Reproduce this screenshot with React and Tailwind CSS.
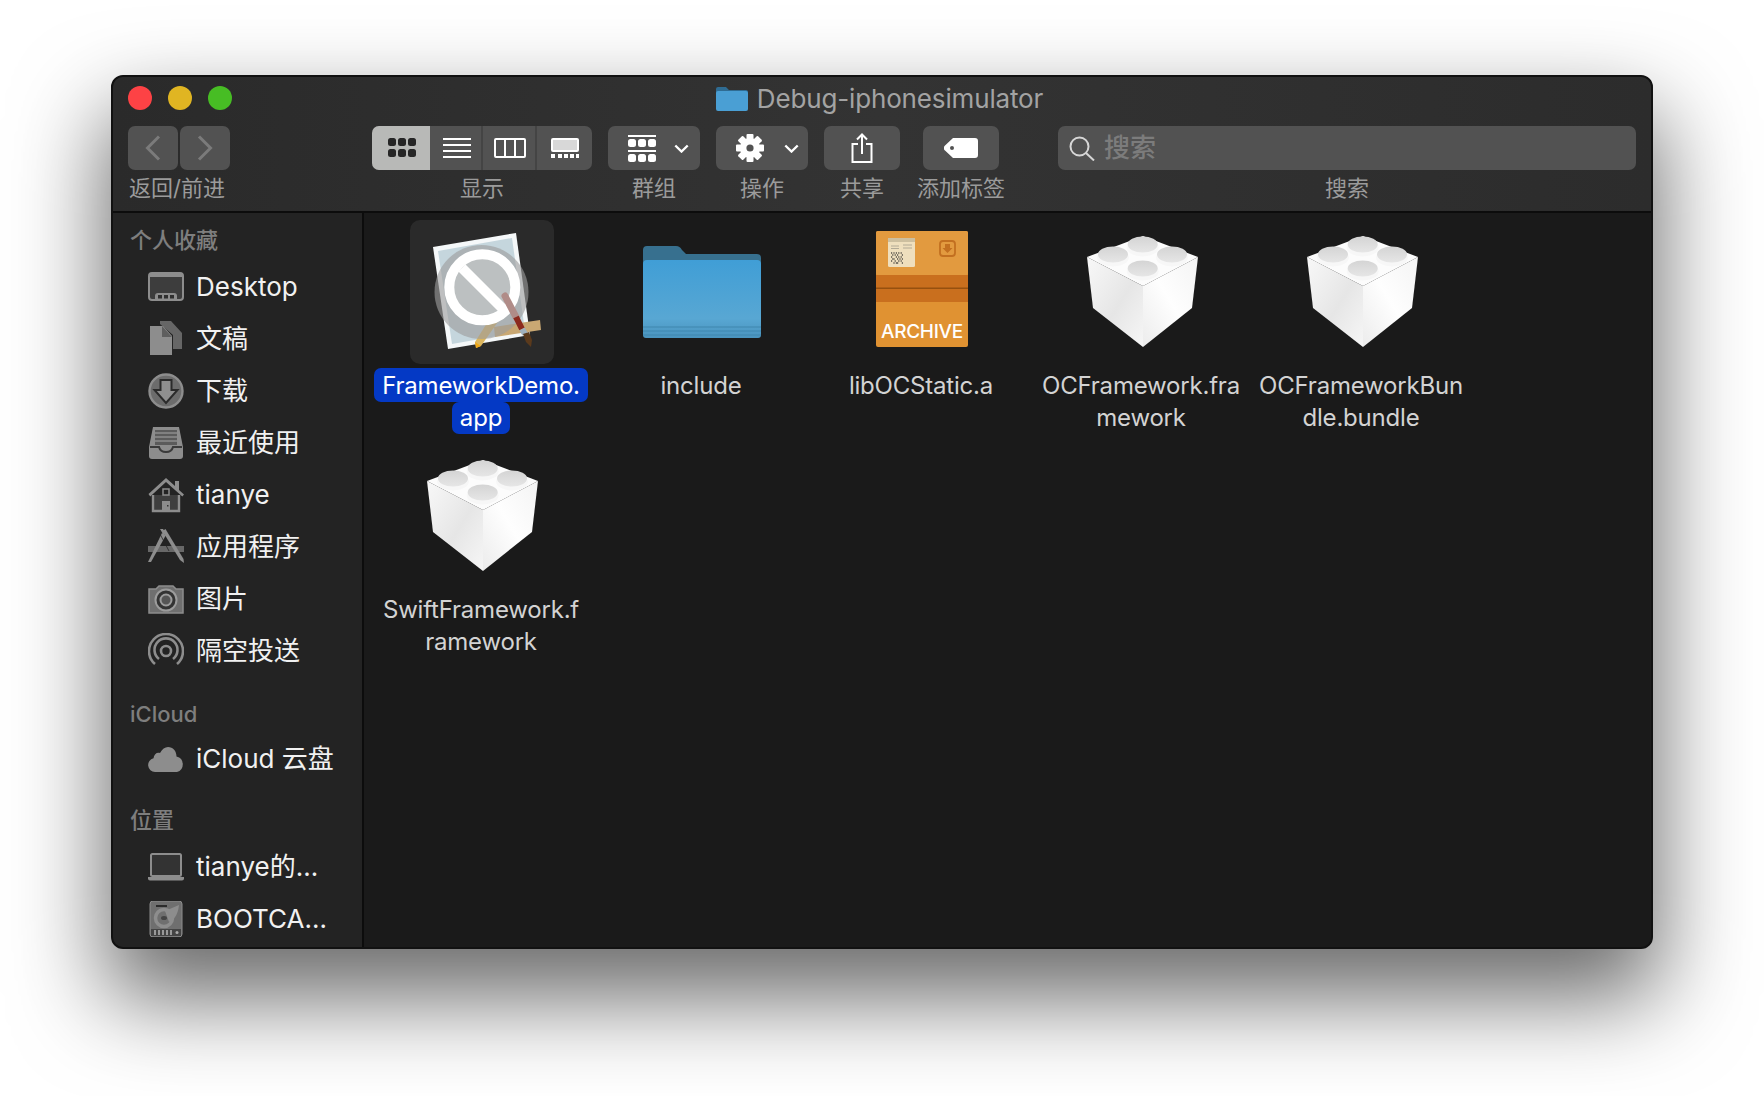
import React from "react";

const font = { fontFamily: 'Inter, "Noto Sans CJK SC", sans-serif' };

const Chevron = () => (
  <svg width="15" height="9" viewBox="0 0 15 9" className="shrink-0">
    <path d="M1.300 1.500 7.500 7.500l6.200-6" fill="none" stroke="#fff" strokeWidth="2.400" />
  </svg>
);

const Dots = ({ color, y, size = 8, x = 0, gap = 10 }) => (
  <>
    {[0, 1, 2].map((i) => (
      <rect key={i} x={x + i * gap} y={y} width={size} height={size} rx="2.5" fill={color} />
    ))}
  </>
);

const Gear = () => {
  const teeth = [0, 45, 90, 135];
  return (
    <svg width="30" height="30" viewBox="0 0 30 30">
      {teeth.map((a) => (
        <rect key={a} x="11.5" y="1" width="7" height="28" rx="1" fill="#fff" transform={`rotate(${a} 15 15)`} />
      ))}
      <circle cx="15" cy="15" r="10" fill="#fff" />
      <circle cx="15" cy="15" r="3.6" fill="#525252" />
    </svg>
  );
};

function TitleFolder() {
  return (
    <svg width="32" height="24" viewBox="0 0 32 24" className="shrink-0">
      <path d="M0 2a2 2 0 0 1 2-2h8l3 3h17a2 2 0 0 1 2 2v6H0Z" fill="#2f6c93" />
      <rect x="0" y="4" width="32" height="20" rx="2" fill="#4a9fd4" />
    </svg>
  );
}

function ToolGroup({ label, className = "", labelClass = "", children }) {
  return (
    <div className={`flex flex-col items-center ${className}`}>
      {children}
      <div className={`mt-[7px] h-[22px] whitespace-nowrap text-[22px] leading-[22px] text-[#9b9b9b] ${labelClass}`}>{label}</div>
    </div>
  );
}

const btn = "flex h-[44px] items-center rounded-[7px] bg-[#525252]";

function Toolbar() {
  return (
    <div className="h-[136px] shrink-0 bg-gradient-to-r from-[#2a2a2a] via-[#333333] to-[#2c2c2c] border-b-2 border-[#0c0c0c]">
      <div className="mb-[7px] grid h-[42px] grid-cols-[1fr_auto_1fr] items-center pl-[15px]">
        <div className="flex gap-[16px]">
          <span className="h-[24px] w-[24px] rounded-full bg-[#fd4245]" />
          <span className="h-[24px] w-[24px] rounded-full bg-[#e0b522]" />
          <span className="h-[24px] w-[24px] rounded-full bg-[#47bd24]" />
        </div>
        <div className="flex items-center gap-[9px] pr-[20px] pt-[1px]">
          <TitleFolder />
          <span className="text-[26px] leading-[32px] tracking-[-0.15px] text-[#a3a3a3]">Debug-iphonesimulator</span>
        </div>
        <div />
      </div>
      <div className="flex pl-[15px]">
        <ToolGroup label="返回/前进" className="w-[102px]" labelClass="pr-[4px]">
          <div className="flex gap-[2px]">
            <div className={`${btn} w-[50px] justify-center`}>
              <svg width="16" height="26" viewBox="0 0 16 26"><path d="M14 1.5 2.5 13 14 24.5" fill="none" stroke="#7b7b7b" strokeWidth="3" /></svg>
            </div>
            <div className={`${btn} w-[50px] justify-center`}>
              <svg width="16" height="26" viewBox="0 0 16 26"><path d="M2 1.5 13.5 13 2 24.5" fill="none" stroke="#7b7b7b" strokeWidth="3" /></svg>
            </div>
          </div>
        </ToolGroup>
        <ToolGroup label="显示" className="ml-[142px] w-[220px]">
          <div className="flex h-[44px] w-[220px] overflow-hidden rounded-[7px] bg-[#525252]">
            <div className="flex w-[58px] items-center justify-center bg-[#b8b9b7] pl-[2px]">
              <svg width="28" height="20" viewBox="0 0 28 20">
                <Dots color="#262626" y="0" />
                <Dots color="#262626" y="11" />
              </svg>
            </div>
            <div className="flex w-[53px] items-center justify-center border-r-2 border-[#444444] pl-[2px]">
              <svg width="28" height="20" viewBox="0 0 28 20" fill="#fff">
                <rect y="0" width="28" height="2" /><rect y="6" width="28" height="2" /><rect y="12" width="28" height="2" /><rect y="18" width="28" height="2" />
              </svg>
            </div>
            <div className="flex w-[54px] items-center justify-center border-r-2 border-[#444444] pl-[2px]">
              <svg width="32" height="20" viewBox="0 0 32 20" fill="none" stroke="#fff" strokeWidth="2">
                <rect x="1" y="1" width="30" height="18" rx="1" /><path d="M11 1v18M21 1v18" />
              </svg>
            </div>
            <div className="flex w-[55px] items-center justify-center">
              <svg width="28" height="20" viewBox="0 0 28 20">
                <rect x="1" y="1" width="26" height="12" rx="1" fill="#d8d8d8" stroke="#fff" strokeWidth="2" />
                {[0, 1, 2, 3, 4].map((i) => (<rect key={i} x={i * 6 + (i ? 1 : 0)} y="16" width="4" height="4" fill="#fff" />))}
              </svg>
            </div>
          </div>
        </ToolGroup>
        <ToolGroup label="群组" className="ml-[16px] w-[92px]">
          <div className={`${btn} w-[92px] justify-between pr-[11px] pl-[20px]`}>
            <svg width="28" height="27" viewBox="0 0 28 27">
              <rect width="28" height="2" fill="#fff" />
              <Dots color="#fff" y="4" />
              <rect y="15" width="28" height="2" fill="#fff" />
              <Dots color="#fff" y="19" />
            </svg>
            <Chevron />
          </div>
        </ToolGroup>
        <ToolGroup label="操作" className="ml-[16px] w-[92px]">
          <div className={`${btn} w-[92px] justify-between pr-[9px] pl-[19px]`}>
            <Gear />
            <Chevron />
          </div>
        </ToolGroup>
        <ToolGroup label="共享" className="ml-[16px] w-[76px]">
          <div className={`${btn} w-[76px] justify-center`}>
            <svg width="22" height="30" viewBox="0 0 22 30" fill="none" stroke="#fff" strokeWidth="2">
              <path d="M7 11H1.5v18h19V11H15" />
              <path d="M11 21V1.5M6 6.5l5-5 5 5" />
            </svg>
          </div>
        </ToolGroup>
        <ToolGroup label="添加标签" className="ml-[23px] w-[76px]">
          <div className={`${btn} w-[76px] justify-center`}>
            <svg width="34" height="20" viewBox="0 0 34 20">
              <path fillRule="evenodd" d="M9 0h22a3 3 0 0 1 3 3v14a3 3 0 0 1-3 3H9L1 12.5a3.5 3.5 0 0 1 0-5ZM8 8a2 2 0 1 0 0 4 2 2 0 0 0 0-4Z" fill="#fff" />
            </svg>
          </div>
        </ToolGroup>
        <ToolGroup label="搜索" className="ml-[59px] w-[578px]">
          <div className={`${btn} w-[578px] justify-start pl-[11px]`}>
            <svg width="26" height="25" viewBox="0 0 26 25" fill="none" stroke="#d6d6d6" strokeWidth="2">
              <circle cx="10.5" cy="10.5" r="9" /><path d="m17 17 8 7.5" />
            </svg>
            <span className="ml-[9px] text-[26px] font-medium leading-[32px] text-[#7c7c7c]">搜索</span>
          </div>
        </ToolGroup>
      </div>
    </div>
  );
}

const G = "#8d8d8d";
const sideIcons = {
  desktop: (
    <>
      <rect x="1" y="4" width="34" height="27" rx="3" fill="#3d3d3d" stroke={G} strokeWidth="2" />
      <rect x="1" y="4" width="34" height="4" fill={G} />
      <path d="M7 31v-4a3 3 0 0 1 3-3h16a3 3 0 0 1 3 3v4Z" fill={G} />
      <rect x="10" y="26" width="4" height="3.5" fill="#2f2f2f" /><rect x="16" y="26" width="4" height="3.5" fill="#2f2f2f" /><rect x="22" y="26" width="4" height="3.5" fill="#2f2f2f" />
    </>
  ),
  docs: (
    <>
      <path d="M12 0h11l11 12v16h-9V14L12 3Z" fill="#666" />
      <path d="M2 5h13l9 10v19H2Z" fill={G} />
      <path d="M14 5v11h10Z" fill="#5e5e5e" />
    </>
  ),
  download: (
    <>
      <circle cx="18" cy="18" r="16.5" fill="#6c6c6c" stroke={G} strokeWidth="2.4" />
      <path d="M12.5 7h11v10h6L18 30 6.5 17h6Z" fill="#8f8f8f" stroke="#2b2b2b" strokeWidth="2" />
    </>
  ),
  recents: (
    <>
      <path d="M5 2h26l4 20v9a3 3 0 0 1-3 3H4a3 3 0 0 1-3-3v-9Z" fill={G} />
      <rect x="7" y="5" width="22" height="15" fill="#5b5b5b" />
      <path d="M7 8h22M7 12h22M7 16h22" stroke={G} strokeWidth="1.6" />
      <path d="M2 22h9c1 4 3 5 7 5s6-1 7-5h9" fill="none" stroke="#3a3a3a" strokeWidth="2" />
    </>
  ),
  home: (
    <>
      <path d="M5 18v16h26V18" fill="#3e3e3e" stroke={G} strokeWidth="2.400" />
      <path d="M0.500 17 18 1l9 8V4h4v9l5 4.500-1.700 2L18 5 2.200 19.500Z" fill={G} />
      <rect x="15" y="12" width="6" height="6" fill="none" stroke={G} strokeWidth="1.500" />
      <rect x="14" y="24" width="8" height="10" fill={G} />
      <rect x="19" y="28" width="1.500" height="1.500" fill="#333" />
    </>
  ),
  apps: (
    <>
      <path d="M0 17h36v6H0Z" fill={G} opacity=".65" />
      <path d="m0 33 14-29 4 2L3 33Z" fill={G} />
      <path d="M12 0h3l4 6-4-1Z" fill={G} />
      <path d="m14.500 2 3-2 18 30 .500 4-4-3Z" fill={G} />
      <path d="M21 22 12 5" stroke="#232323" strokeWidth=".800" />
    </>
  ),
  camera: (
    <>
      <path d="M1 8h7l3-3h14l3 3h7v24H1Z" fill="#6f6f6f" stroke={G} strokeWidth="1.500" />
      <circle cx="18" cy="19" r="10.500" fill="#333" stroke="#9c9c9c" strokeWidth="2" />
      <circle cx="18" cy="19" r="5.500" fill="#555" stroke="#9c9c9c" strokeWidth="2" />
    </>
  ),
  airdrop: (
    <g fill="none" stroke={G} strokeWidth="2.600">
      <path d="M7 31A17 17 0 1 1 29 31" />
      <path d="M11 26a11.500 11.500 0 1 1 14 0" />
      <circle cx="18" cy="18" r="5" />
    </g>
  ),
  cloud: (
    <path d="M7 31a7 7 0 0 1-1.500-13.800C6 13 9 11 12 12c2-4 5-6 8-6 5 0 8.500 4 8.500 9.500A8 8 0 0 1 29 31Z" fill={G} />
  ),
  laptop: (
    <>
      <rect x="3" y="5" width="30" height="22" rx="1.500" fill="#333" stroke={G} strokeWidth="2" />
      <path d="M0 28h36v1.500a2 2 0 0 1-2 2H2a2 2 0 0 1-2-2Z" fill={G} />
    </>
  ),
  disk: (
    <>
      <path d="M5 0h26a3 3 0 0 1 3 3v30a3 3 0 0 1-3 3H5a3 3 0 0 1-3-3V3a3 3 0 0 1 3-3Z" fill="#6f6f6f" stroke={G} strokeWidth="1" />
      <rect x="8" y="4" width="11" height="2" fill="#2b2b2b" />
      <circle cx="16" cy="17" r="8.500" fill="none" stroke={G} strokeWidth="3.500" />
      <path d="M17 10 31 4c-1 9-4 14-10 17Z" fill={G} />
      <ellipse cx="16" cy="17" rx="3" ry="2" fill="#444" />
      <rect x="3" y="28" width="30" height="7" fill="#444" />
      <path d="M7 29v5M11 29v5M15 29v5M19 29v5M23 29v5" stroke="#999" strokeWidth="2" />
      <circle cx="29" cy="31.500" r="1.500" fill="#aaa" />
    </>
  ),
};

function Row({ icon, children }) {
  return (
    <div className="flex h-[52px] items-center pl-[35px]">
      <svg width="36" height="36" viewBox="0 0 36 36" className="shrink-0">{sideIcons[icon]}</svg>
      <span className="ml-[12px] whitespace-nowrap text-[26px] leading-[32px] text-[#f1f1f1]">{children}</span>
    </div>
  );
}

function SideHead({ children, className = "" }) {
  return <div className={`h-[28px] pl-[17px] text-[22px] font-medium leading-[28px] text-[#7e7e7e] ${className}`}>{children}</div>;
}

function Sidebar() {
  return (
    <aside className="w-[251px] shrink-0 border-r-2 border-[#0c0c0c] bg-[#232323] pt-[13px]">
      <SideHead className="mb-[7px]">个人收藏</SideHead>
      <Row icon="desktop">Desktop</Row>
      <Row icon="docs">文稿</Row>
      <Row icon="download">下载</Row>
      <Row icon="recents">最近使用</Row>
      <Row icon="home">tianye</Row>
      <Row icon="apps">应用程序</Row>
      <Row icon="camera">图片</Row>
      <Row icon="airdrop">隔空投送</Row>
      <SideHead className="mt-[23px] mb-[5px]">iCloud</SideHead>
      <Row icon="cloud">iCloud 云盘</Row>
      <SideHead className="mt-[21px] mb-[7px]">位置</SideHead>
      <Row icon="laptop">tianye的…</Row>
      <Row icon="disk">BOOTCA…</Row>
    </aside>
  );
}

function LegoIcon() {
  const Stud = ({ cx, cy }) => (
    <g>
      <ellipse cx={cx} cy={cy + 3} rx="16" ry="9" fill="#f7f7f7" />
      <ellipse cx={cx} cy={cy} rx="15" ry="8" fill="url(#studTop)" />
    </g>
  );
  return (
    <svg width="144" height="144" viewBox="0 0 144 144">
      <defs>
        <linearGradient id="studTop" x1="0" y1="0" x2="0" y2="1">
          <stop offset="0" stopColor="#d4d4d4" />
          <stop offset="1" stopColor="#e6e6e6" />
        </linearGradient>
        <linearGradient id="legoL" x1="0" y1="0" x2="1" y2="1">
          <stop offset="0" stopColor="#f8f8f8" />
          <stop offset=".55" stopColor="#e6e6e6" />
          <stop offset="1" stopColor="#f6f6f6" />
        </linearGradient>
        <linearGradient id="legoR" x1="1" y1="0" x2="0" y2="1">
          <stop offset="0" stopColor="#f4f4f4" />
          <stop offset=".5" stopColor="#fefefe" />
          <stop offset="1" stopColor="#ececec" />
        </linearGradient>
      </defs>
      <path d="M18 37 74 16l55 21-55 29Z" fill="#fcfcfc" />
      <path d="M18 37 74 66v61L24 88Z" fill="url(#legoL)" />
      <path d="M129 37 74 66v61l49-39Z" fill="url(#legoR)" />
      <Stud cx={73.7} cy={24.5} />
      <Stud cx={44} cy={34.5} />
      <Stud cx={103} cy={34.5} />
      <Stud cx={73.7} cy={48.5} />
    </svg>
  );
}

function FolderIcon() {
  return (
    <svg width="144" height="144" viewBox="0 0 144 144">
      <defs>
        <linearGradient id="folderF" x1="0" y1="0" x2="0" y2="1">
          <stop offset="0" stopColor="#409ed6" />
          <stop offset=".75" stopColor="#58a7d3" />
          <stop offset="1" stopColor="#4a93bd" />
        </linearGradient>
      </defs>
      <path d="M14 30a4 4 0 0 1 4-4h29c3 0 4 1 6 4l4 4h71a4 4 0 0 1 4 4v20H14Z" fill="#37708f" />
      <path d="M14 44a4 4 0 0 1 4-4h110a4 4 0 0 1 4 4v71a3 3 0 0 1-3 3H17a3 3 0 0 1-3-3Z" fill="url(#folderF)" />
      <path d="M14 107h118M14 111h118M14 115h118" stroke="#3f86ae" strokeWidth="1" />
    </svg>
  );
}

const qr = [
  [0, 0], [2, 0], [4, 0], [6, 0], [8, 0], [1, 1], [3, 1], [5, 1], [9, 1], [0, 2], [4, 2], [6, 2], [8, 2],
  [1, 3], [2, 3], [5, 3], [7, 3], [9, 3], [0, 4], [3, 4], [6, 4], [8, 4], [2, 5], [4, 5], [5, 5], [9, 5],
];

function ArchiveIcon() {
  return (
    <div className="relative h-[144px] w-[144px]">
      <svg width="144" height="144" viewBox="0 0 144 144">
        <rect x="27" y="11" width="92" height="116" rx="2" fill="#e09232" />
        <rect x="27" y="11" width="92" height="44" rx="2" fill="#e29a3f" />
        <rect x="27" y="55" width="92" height="27" fill="#c96f1e" />
        <rect x="27" y="67.500" width="92" height="1.500" fill="#96500f" />
        <rect x="39" y="18" width="27" height="29" rx="1.500" fill="#efdfbd" />
        <rect x="39" y="18" width="27" height="4" fill="#cdbf9f" />
        <path d="M42 26h8M42 28.500h8M54 25h9M54 28h9" stroke="#b3aa95" strokeWidth="1" />
        {qr.map(([x, y]) => (
          <rect key={`${x}-${y}`} x={42 + x * 1.2} y={32 + y * 2} width="1.200" height="2" fill="#7d7666" />
        ))}
        <rect x="91" y="21" width="15" height="15" rx="3" fill="none" stroke="#c26f20" strokeWidth="1.800" />
        <path d="M96 24h5v4h2.500l-5 5-5-5H96Z" fill="#c26f20" />
      </svg>
      <span className="absolute left-[32px] top-[100px] text-[19px] font-medium leading-[24px] tracking-[-0.3px] text-white">ARCHIVE</span>
    </div>
  );
}

function AppIcon() {
  return (
    <div className="ml-[1px] flex h-[144px] w-[144px] items-center justify-center rounded-[10px] bg-[#2a2a2a]">
      <svg width="144" height="144" viewBox="0 0 144 144">
        <path d="M23 27 106 13l14 102-82 14Z" fill="#f5f8f9" />
        <path d="M28 31 102 18l13 93-73 13Z" fill="#c5d6dd" />
        <path d="m84 107 46-7 1 10-46 7Z" fill="#c9a873" />
        <path d="M84 92 65 122l1 6 5-2 21-30Z" fill="#dcb65f" />
        <path d="m65 122 1 6 5-2Z" fill="#f0a818" />
        <circle cx="71.500" cy="72" r="47" fill="#9c9c9c" fillOpacity=".62" />
        <circle cx="72.300" cy="67.300" r="33" fill="#bcc0c1" stroke="#ffffff" strokeWidth="10" />
        <path d="M52 48 94 90" stroke="#fff" strokeWidth="10" />
        <path d="M95 76 106 97" stroke="#b08c88" strokeWidth="7" strokeLinecap="round" />
        <path d="M106 97 112 109" stroke="#8c2a1e" strokeWidth="6" />
        <path d="M112 109 115 114" stroke="#9fb0bd" strokeWidth="6" />
        <path d="m113 114 6-2 3 8-1 7-5-5Z" fill="#5b3a1c" />
      </svg>
    </div>
  );
}

function Item({ lines, selected, children }) {
  return (
    <div className="flex h-[224px] w-[220px] flex-col items-center">
      <div className="h-[144px] w-[144px]">{children}</div>
      <div className="mt-[6px] flex flex-col items-center">
        {lines.map((l, i) => (
          <span
            key={l}
            className={`whitespace-nowrap text-[24px] tracking-[-0.2px] ${
              selected ? "rounded-[7px] bg-[#0439c5] px-[8px] text-white" : "text-[#d3d3d3]"
            } ${selected && i === 0 ? "-mt-[2px] h-[34px] leading-[36px]" : "h-[32px] leading-[32px]"}`}
          >
            {l}
          </span>
        ))}
      </div>
    </div>
  );
}

export default function App() {
  return (
    <div className="h-[1096px] w-[1764px] overflow-hidden bg-white pl-[111px] pt-[75px]" style={font}>
      <div className="flex h-[874px] w-[1542px] flex-col overflow-visible rounded-[12px] border-2 border-[#111111] bg-[#1a1a1a] shadow-[0_44px_90px_6px_rgba(0,0,0,0.58)]">
        <div className="flex h-full flex-col overflow-hidden rounded-[10px]">
          <Toolbar />
          <div className="flex min-h-0 flex-1">
            <Sidebar />
            <main className="grid flex-1 grid-cols-[repeat(5,220px)] content-start bg-[#1a1a1a] pl-[7px] pt-[7px]">
              <Item lines={["FrameworkDemo.", "app"]} selected><AppIcon /></Item>
              <Item lines={["include"]}><FolderIcon /></Item>
              <Item lines={["libOCStatic.a"]}><ArchiveIcon /></Item>
              <Item lines={["OCFramework.fra", "mework"]}><LegoIcon /></Item>
              <Item lines={["OCFrameworkBun", "dle.bundle"]}><LegoIcon /></Item>
              <Item lines={["SwiftFramework.f", "ramework"]}><LegoIcon /></Item>
            </main>
          </div>
        </div>
      </div>
    </div>
  );
}
